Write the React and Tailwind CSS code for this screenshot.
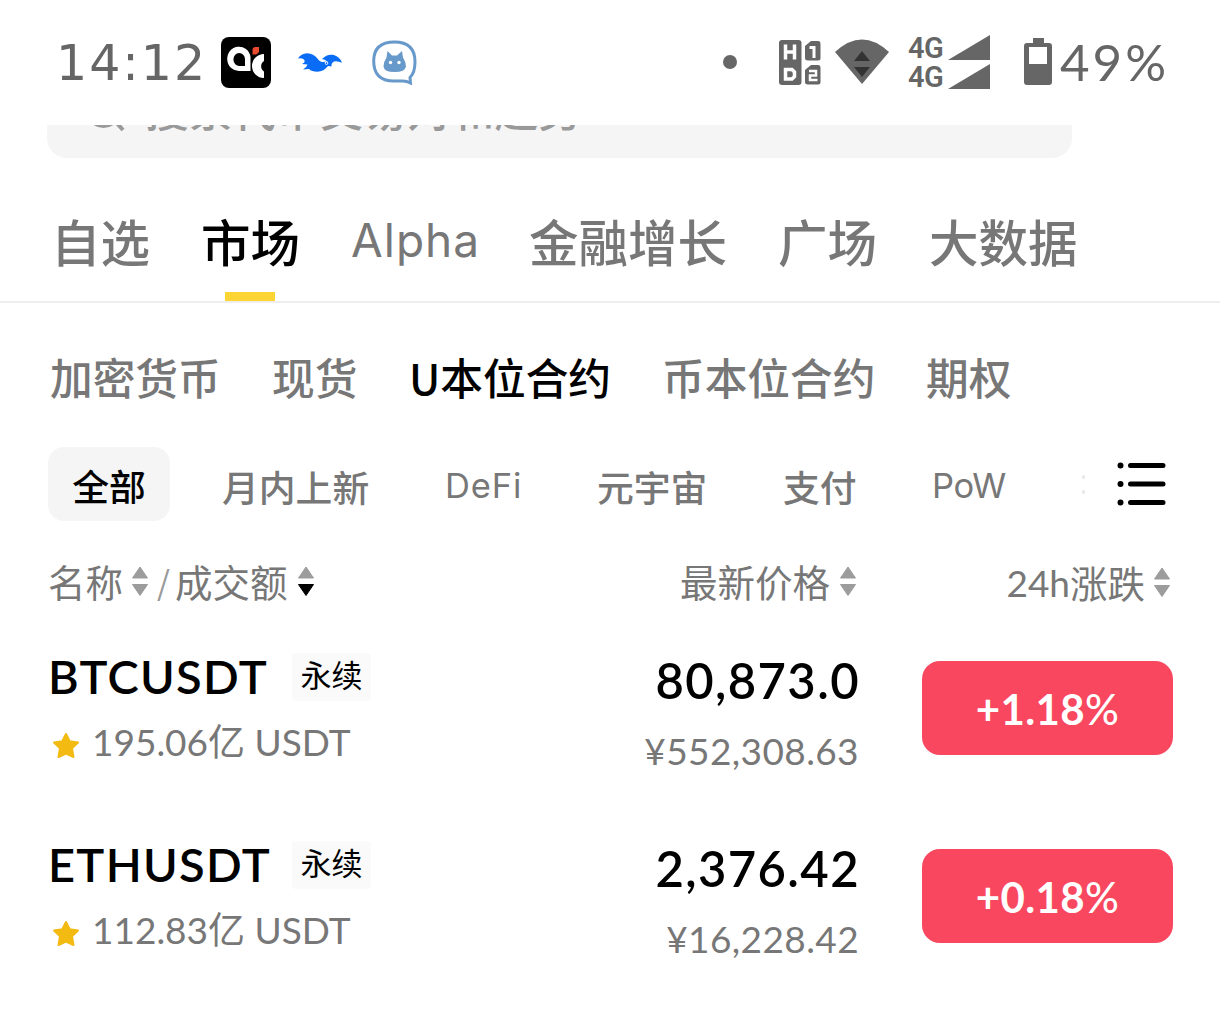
import React from 'react';

const tabs = [
    { label: '自选', width: 'w-[98px]' },
    { label: '市场', width: 'w-[98px]', active: true },
    { label: 'Alpha', width: 'w-[126px]', latin: true },
    { label: '金融增长', width: 'w-[197px]' },
    { label: '广场', width: 'w-[99px]' },
    { label: '大数据', width: 'w-[148px]' },
];

const subTabs = [
    { label: '加密货币', width: 'w-[170px]' },
    { label: '现货', width: 'w-[85px]' },
    { label: 'U本位合约', width: 'w-[201px]', active: true },
    { label: '币本位合约', width: 'w-[212px]' },
    { label: '期权', width: 'w-[85px]' },
];

const categories = [
    { label: '月内上新', width: 'w-[147px]' },
    { label: 'DeFi', width: 'w-[76px]', latin: 'tracking-[0.9px]' },
    { label: '元宇宙', width: 'w-[110px]' },
    { label: '支付', width: 'w-[73px]' },
    { label: 'PoW', width: 'w-[74px]', latin: 'tracking-[-0.3px]' },
];

const pairs = [
    { symbol: 'BTCUSDT', volume: '195.06亿 USDT', price: '80,873.0', fiat: '¥552,308.63', change: '+1.18' },
    { symbol: 'ETHUSDT', volume: '112.83亿 USDT', price: '2,376.42', fiat: '¥16,228.42', change: '+0.18' },
];

const CommunityIcon = () => (
    <svg className="h-[51px] w-[50px]" viewBox="0 0 50 51">
        <rect width="50" height="51" rx="8" fill="#000" />
        <path d="M29.500 34H19A11.700 12.200 0 1 1 29.500 20ZM24 29V22.500A5.800 6.500 0 1 0 18.500 29Z" fill="#fff" fillRule="evenodd" />
        <path d="M43 17A12 12 0 0 0 43 41V34.500A5.500 6 0 0 1 43 24Z" fill="#fff" />
        <path d="M31.500 17.500V13Q31.500 10 34.500 10H38V14.500Q37.500 16.500 35 17.500Z" fill="#ea4a30" />
    </svg>
);

const BirdIcon = () => (
    <svg className="h-[20px] w-[44px]" viewBox="0 0 44 20">
        <path
            d="M0 5.500Q3 0.500 9 0.300Q16 1 19 5Q22 9.500 25 9L29 8.500Q27 6 24 6Q29 0.800 35 1.800Q42 4 44 9.800Q39 7.500 36 8.500Q33 10 33.500 13.500L30 13Q26 18 21 18.600Q14 19 11 16L5 16.500Q9 14 9.500 11.500L4 11Q8 9 6 6.500Q3 4.500 0 5.500Z"
            fill="#0a6cf5"
        />
        <circle cx="28.500" cy="10" r="1.800" fill="#fff" />
        <circle cx="28.500" cy="10.200" r="0.900" fill="#0a6cf5" />
    </svg>
);

const CatIcon = () => (
    <svg className="h-[45px] w-[46px]" viewBox="0 0 46 45">
        <path
            d="M22.500 2C36 2 43 8 43 22C43 30 41.500 34 38 37.500L38.500 43Q35 41 30.500 41H22C8 41 1.700 34 1.700 21C1.700 7 10 2 22.500 2Z"
            fill="none"
            stroke="#6799ca"
            strokeWidth="3"
        />
        <path d="M15.500 11L20 15.500H25L30 11L31 17.500Q34 22 34 26.500Q33 32 22.700 32Q12 32 11.500 26.500Q11.500 22 14.500 17.500Z" fill="#6799ca" />
        <circle cx="18.500" cy="22.500" r="1.700" fill="#fff" />
        <circle cx="27" cy="22.500" r="1.700" fill="#fff" />
    </svg>
);

const HdIcon = () => (
    <svg className="h-[45px] w-[42px]" viewBox="0 0 42 45" fill="none">
        <rect width="22.500" height="45" rx="3" fill="#666" />
        <path d="M26 6L32 1H39Q41.500 1 41.500 4V18Q41.500 20.500 39 20.500H29Q26 20.500 26 18Z" fill="#666" />
        <path d="M26 30L32 25H39Q41.500 25 41.500 28V42Q41.500 44.500 39 44.500H29Q26 44.500 26 42Z" fill="#666" />
        <g stroke="#fff" strokeWidth="3.500">
            <path d="M6.500 4.500V19.500M15.500 4.500V19.500M6.500 12H15.500" />
            <path d="M6.500 29.500H13L15.500 32V36.500L13 39H6.500Z" />
            <path d="M30.500 7.500H35V18" strokeWidth="3" />
            <path d="M30 31H37V35.500H31V40H38.500" strokeWidth="2.500" />
        </g>
    </svg>
);

const WifiIcon = () => (
    <svg className="h-[45px] w-[54px]" viewBox="0 0 54 45">
        <path d="M0 13Q27-12 54 13L27 45Z" fill="#666" />
        <path d="M19 22H35L27 12ZM19 28H35L27 38Z" fill="#333" />
    </svg>
);

const SignalRow = () => (
    <div className="flex h-[29px] items-end justify-between">
        <span className="h-[24px] w-[36px] font-[Roboto] text-[29px] leading-[24px] font-semibold tracking-[-0.600px]">4G</span>
        <svg className="h-[25px] w-[42px]" viewBox="0 0 42 25">
            <path d="M0 25L42 0V25Z" fill="#666" />
        </svg>
    </div>
);

const BatteryIcon = () => (
    <svg className="h-[47px] w-[28px]" viewBox="0 0 28 47">
        <path d="M9 0H20V5H25Q28 5 28 8V44Q28 47 25 47H3Q0 47 0 44V8Q0 5 3 5H9ZM5 9V26H23V9Z" fill="#666" fillRule="evenodd" />
    </svg>
);

const SortIcon = ({ active }) => (
    <svg className="h-[32px] w-[18px]" viewBox="0 0 18 32">
        <path d="M9 2L16.500 13H1.500Z" fill="#9c9c9c" stroke="#9c9c9c" strokeLinejoin="round" />
        <path d="M9 30.500L16.500 19.500H1.500Z" fill={active ? '#000' : '#9c9c9c'} stroke={active ? '#000' : '#9c9c9c'} strokeLinejoin="round" />
    </svg>
);

const StarIcon = () => (
    <svg className="h-[27px] w-[28px]" viewBox="0 0 28 27">
        <path d="M14 2L17.700 9.300L26 10.500L20 16.300L21.500 25L14 21.500L6.500 25L8 16.300L2 10.500L10.300 9.300Z" fill="#f3ba12" stroke="#f3ba12" strokeWidth="2" strokeLinejoin="round" />
    </svg>
);

const StatusBar = () => (
    <div className="flex h-[125px] items-start pt-[37px] pl-[56px] text-[#666]">
        <span className="h-[51px] w-[165px] pt-px font-['DejaVu_Sans'] text-[49px] leading-[51px] tracking-[2px] whitespace-nowrap">14:12</span>
        <CommunityIcon />
        <div className="ml-[27px] pt-[16px]"><BirdIcon /></div>
        <div className="ml-[30px] pt-[3px]"><CatIcon /></div>
        <div className="mt-[18px] ml-[305px] h-[14px] w-[14px] rounded-full bg-[#666]" />
        <div className="ml-[42px] pt-[3px]"><HdIcon /></div>
        <div className="ml-[14px] pt-[2px]"><WifiIcon /></div>
        <div className="-mt-[6px] ml-[19px] w-[82px]">
            <SignalRow />
            <SignalRow />
        </div>
        <div className="ml-[34px] pt-[1px]"><BatteryIcon /></div>
        <span className="-mt-px ml-[8px] w-[111px] font-[Lato] text-[51px] leading-[51px] tracking-[3px] whitespace-nowrap">49%</span>
    </div>
);

const SearchBar = () => (
    <div className="h-[34px] overflow-hidden pl-[47px]">
        <div className="-mt-[57px] flex h-[90px] w-[1025px] items-center rounded-[20px] bg-[#f5f5f5] text-[#999]">
            <svg className="mt-[2px] ml-[38px] h-[42px] w-[42px]" viewBox="0 0 42 42" fill="none" stroke="#999" strokeWidth="4">
                <circle cx="18.500" cy="17.500" r="15.500" />
                <path d="M30 28L38 37" />
            </svg>
            <span className="mb-[11px] ml-[18px] text-[43.700px] leading-[60px] font-medium">搜索代币交易对和趋势</span>
        </div>
    </div>
);

const PairRow = ({ pair }) => (
    <div className="flex h-[188px] items-start pr-[47px] pl-[48px]">
        <div className="w-[400px]">
            <div className="flex h-[52px] items-center">
                <span className="w-[219px] pb-[2px] font-[Lato] text-[47px] font-semibold tracking-[1.300px] whitespace-nowrap">{pair.symbol}</span>
                <span className="ml-[25px] flex h-[48px] w-[79px] items-center justify-center rounded bg-[#fafafa] pb-[6px] text-[31px]">永续</span>
            </div>
            <div className="mt-[13px] flex h-[52px] items-center text-[#777]">
                <div className="ml-[4px] pt-[6px]"><StarIcon /></div>
                <span className="ml-[12px] font-[Lato,'Noto_Sans_CJK_SC',sans-serif] text-[37px] whitespace-nowrap">{pair.volume}</span>
            </div>
        </div>
        <div className="w-[411px] pt-[4px] text-right font-[Lato]">
            <div className="-mr-px h-[50px] text-[49px] leading-[50px] font-semibold tracking-[1.400px]">{pair.price}</div>
            <div className="mt-[21px] h-[50px] text-[37px] leading-[50px] tracking-[0.400px] text-[#777]">{pair.fiat}</div>
        </div>
        <div className="mt-[10px] ml-auto flex h-[94px] w-[251px] items-center justify-center rounded-[18px] bg-[#f8475e] pt-[3px] font-[Lato] text-[42px] font-bold tracking-[0.400px] text-white">
            {pair.change}<span className="font-medium">%</span>
        </div>
    </div>
);

const App = () => {
    return (
        <div className="h-[1018px] w-[1220px] overflow-hidden bg-white font-['Noto_Sans_CJK_SC',sans-serif] text-black">
            <StatusBar />
            <SearchBar />

            {/* Main tabs */}
            <div className="flex h-[144px] items-start gap-[52px] border-b-2 border-[#eee] pl-[51px] text-[49.500px] font-medium text-[#777]">
                {tabs.map(tab => (
                    <div key={tab.label} className={`${tab.width} relative h-[142px] whitespace-nowrap`}>
                        <div className={`leading-[72px] ${tab.active ? 'text-black' : ''} ${tab.latin ? 'pt-[45px] font-[Inter] text-[46px] font-normal tracking-[1px]' : 'pt-[46px]'}`}>{tab.label}</div>
                        {tab.active && <div className="absolute bottom-0 left-[24px] h-[9px] w-[50px] bg-[#fcd535]" />}
                    </div>
                ))}
            </div>

            {/* Market types */}
            <div className="flex h-[144px] gap-[52px] pt-[41px] pl-[50px] text-[42.700px] leading-[64px] font-medium text-[#777]">
                {subTabs.map(tab => (
                    <div key={tab.label} className={`${tab.width} whitespace-nowrap ${tab.active ? 'text-black' : ''}`}>{tab.label}</div>
                ))}
            </div>

            {/* Categories */}
            <div className="flex h-[74px] items-center pl-[48px] text-[36.800px] font-medium text-[#777]">
                <div className="flex h-[74px] w-[122px] items-center justify-center rounded-[16px] bg-[#f5f5f5] pt-[4px] text-black">全部</div>
                <div className="ml-[52px] flex gap-[76px] pt-[4px] leading-[54px]">
                    {categories.map(item => (
                        <div key={item.label} className={`${item.width} whitespace-nowrap ${item.latin ? `font-[Inter] text-[34.5px] font-normal ${item.latin}` : ''}`}>{item.label}</div>
                    ))}
                </div>
                {/* Faded edge of the next category */}
                <div className="ml-[76px] flex flex-col gap-[11px]">
                    <div className="h-[4px] w-[3px] rounded-full bg-[#e8e8e8]" />
                    <div className="h-[4px] w-[3px] rounded-full bg-[#e8e8e8]" />
                </div>
                <svg className="mr-[54px] ml-auto h-[44px] w-[49px]" viewBox="0 0 49 44" stroke="#000" strokeWidth="5" strokeLinecap="round">
                    <path d="M3.500 3.500V3.600M3.500 22V22.100M3.500 40.500V40.600" strokeWidth="6" />
                    <path d="M13.500 3.500H46M13.500 22H46M13.500 40.500H46" />
                </svg>
            </div>

            {/* Column headers */}
            <div className="flex h-[130px] items-start pt-[33px] pl-[48px] text-[37.500px] leading-[54px] text-[#777]">
                <div className="flex w-[403px] items-center whitespace-nowrap">
                    名称<span className="ml-[8px]"><SortIcon /></span>
                    <span className="mr-[5px] ml-[8px] text-[33px] text-[#999]">/</span>
                    成交额<span className="ml-[10px]"><SortIcon active /></span>
                </div>
                <div className="flex w-[406px] items-center justify-end whitespace-nowrap">
                    最新价格<span className="ml-[9px]"><SortIcon /></span>
                </div>
                <div className="flex w-[314px] items-center justify-end whitespace-nowrap">
                    <span className="pt-[2px] font-[Lato] text-[37px]">24h</span>涨跌<span className="ml-[8px]"><SortIcon /></span>
                </div>
            </div>

            {pairs.map(pair => (
                <PairRow key={pair.symbol} pair={pair} />
            ))}
        </div>
    );
};

export default App;
